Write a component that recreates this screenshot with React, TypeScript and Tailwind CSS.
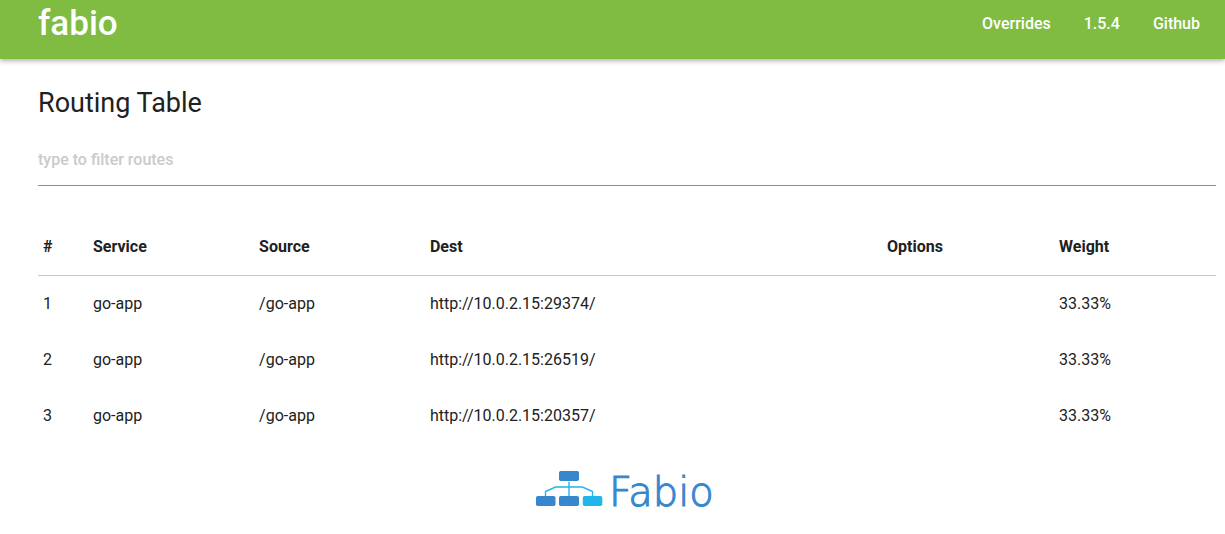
import { useState } from "react";

type Route = {
  service: string;
  source: string;
  dest: string;
  options: string;
  weight: string;
};

const routes: Route[] = [
  { service: "go-app", source: "/go-app", dest: "http://10.0.2.15:29374/", options: "", weight: "33.33%" },
  { service: "go-app", source: "/go-app", dest: "http://10.0.2.15:26519/", options: "", weight: "33.33%" },
  { service: "go-app", source: "/go-app", dest: "http://10.0.2.15:20357/", options: "", weight: "33.33%" },
];

const links = [
  { label: "Overrides", href: "#overrides" },
  { label: "1.5.4", href: "#version" },
  { label: "Github", href: "#github" },
];

const headings = ["#", "Service", "Source", "Dest", "Options", "Weight"];

function Logo() {
  return (
    <svg
      width="184"
      height="48"
      viewBox="0 0 184 48"
      role="img"
      aria-label="Fabio"
      className="overflow-visible"
    >
      <g fill="none" stroke="#21b5ee" strokeWidth="1.4">
        <path d="M34 11V25" />
        <path d="M10.5 25V20.5L20.5 16H47.5L57.5 20.5V25" />
      </g>
      <g fill="#3787cd">
        <rect x="24" y="0" width="20" height="10" rx="1.8" />
        <rect x="1" y="25" width="19.5" height="10" rx="1.8" />
        <rect x="24" y="25" width="20" height="10" rx="1.8" />
      </g>
      <rect x="47.8" y="25" width="19.5" height="10" rx="1.8" fill="#21b5ee" />
      <text
        x="74"
        y="35"
        fill="#3787cd"
        stroke="#3787cd"
        strokeWidth="1.1"
        className="font-['DejaVu_Sans',sans-serif] text-[40px] font-extralight"
      >
        Fabio
      </text>
    </svg>
  );
}

export default function App() {
  const [filter, setFilter] = useState("");
  const visible = routes.filter((r) =>
    [r.service, r.source, r.dest].some((value) => value.includes(filter)),
  );

  return (
    <div className="min-h-screen bg-white font-['Roboto',sans-serif] text-base text-[#212121]">
      <header className="flex items-start justify-between bg-[#80bc42] pr-[25px] pb-3 pl-[38px] text-white shadow-[0_2px_5px_0_rgba(0,0,0,0.3)]">
        <a href="#home" className="text-[35px] leading-[47px] font-medium">
          fabio
        </a>
        <nav className="flex gap-[33px] leading-[47px] font-medium">
          {links.map((link) => (
            <a key={link.label} href={link.href}>
              {link.label}
            </a>
          ))}
        </nav>
      </header>

      <main className="pt-6 pr-[9px] pl-[38px]">
        <h1 className="text-[27px] leading-10">Routing Table</h1>
        <input
          type="text"
          aria-label="Filter routes"
          placeholder="type to filter routes"
          value={filter}
          onChange={(event) => setFilter(event.target.value)}
          className="mt-3 block h-[51px] w-full border-b border-[#8e8e8e] bg-transparent pb-0.5 font-medium outline-none placeholder:text-[#cacaca]"
        />

        <table className="mt-8 w-full table-fixed border-collapse text-left">
          <colgroup>
            <col className="w-[50px]" />
            <col className="w-[14.1%]" />
            <col className="w-[14.5%]" />
            <col />
            <col className="w-[14.6%]" />
            <col className="w-[13.75%]" />
          </colgroup>
          <thead>
            <tr className="h-[57px] border-b border-[#c8c8c8]">
              {headings.map((heading) => (
                <th key={heading} scope="col" className="px-[5px] pt-0.5 font-bold">
                  {heading}
                </th>
              ))}
            </tr>
          </thead>
          <tbody>
            {visible.map((route, index) => (
              <tr key={route.dest} className="h-14">
                <td className="px-[5px] pt-0.5">{index + 1}</td>
                <td className="px-[5px] pt-0.5">{route.service}</td>
                <td className="px-[5px] pt-0.5">{route.source}</td>
                <td className="px-[5px] pt-0.5">{route.dest}</td>
                <td className="px-[5px] pt-0.5">{route.options}</td>
                <td className="px-[5px] pt-0.5">{route.weight}</td>
              </tr>
            ))}
          </tbody>
        </table>

        <footer className="mt-7 flex justify-center">
          <Logo />
        </footer>
      </main>
    </div>
  );
}
